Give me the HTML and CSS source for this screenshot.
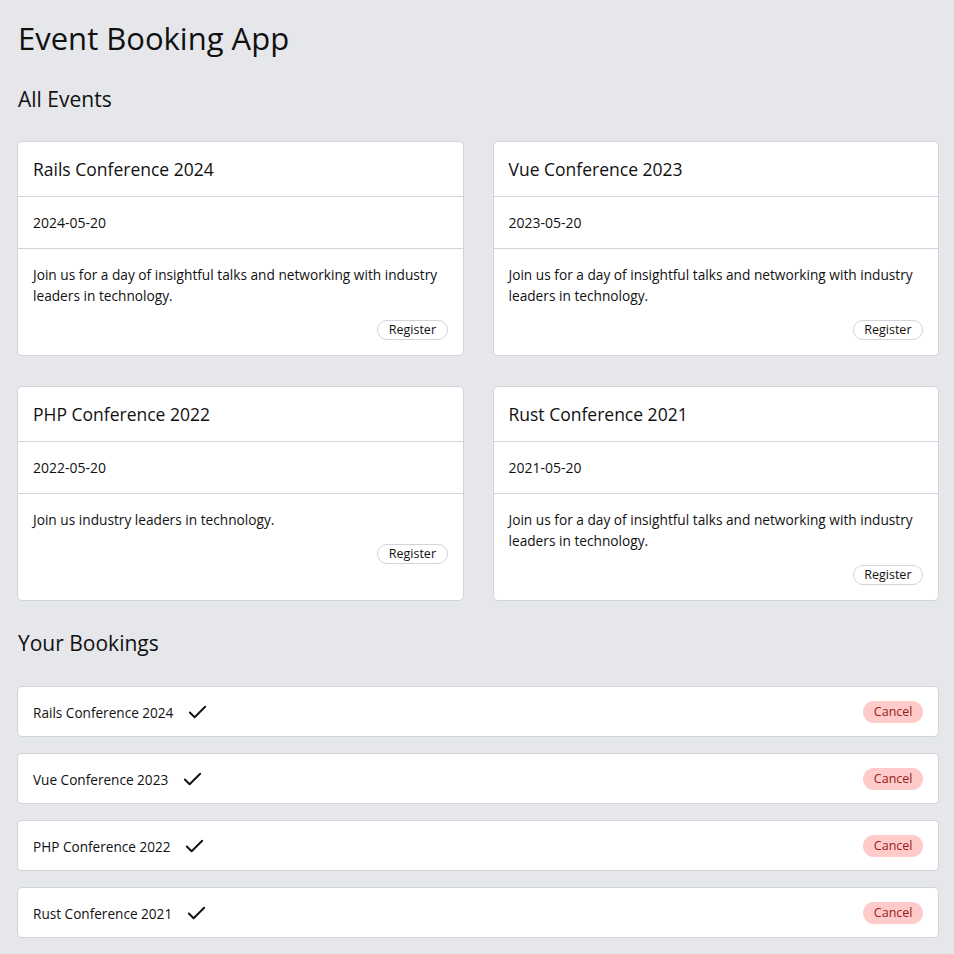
FILE: index.html
```html
<!DOCTYPE html>
<html lang="en">
<head>
<meta charset="utf-8">
<title>Event Booking App</title>
<link rel="stylesheet" href="styles.css">
</head>
<body>
<main class="app">
  <h1 class="app-title">Event Booking App</h1>

  <section class="section">
    <h2 class="section-title">All Events</h2>
    <div class="event-grid">
      <article class="event-card">
        <header class="event-head">Rails Conference 2024</header>
        <div class="event-date">2024-05-20</div>
        <div class="event-body">
          <p class="event-desc">Join us for a day of insightful talks and networking with industry leaders in technology.</p>
          <div class="event-actions"><button class="btn-register">Register</button></div>
        </div>
      </article>
      <article class="event-card">
        <header class="event-head">Vue Conference 2023</header>
        <div class="event-date">2023-05-20</div>
        <div class="event-body">
          <p class="event-desc">Join us for a day of insightful talks and networking with industry leaders in technology.</p>
          <div class="event-actions"><button class="btn-register">Register</button></div>
        </div>
      </article>
      <article class="event-card">
        <header class="event-head">PHP Conference 2022</header>
        <div class="event-date">2022-05-20</div>
        <div class="event-body">
          <p class="event-desc">Join us industry leaders in technology.</p>
          <div class="event-actions"><button class="btn-register">Register</button></div>
        </div>
      </article>
      <article class="event-card">
        <header class="event-head">Rust Conference 2021</header>
        <div class="event-date">2021-05-20</div>
        <div class="event-body">
          <p class="event-desc">Join us for a day of insightful talks and networking with industry leaders in technology.</p>
          <div class="event-actions"><button class="btn-register">Register</button></div>
        </div>
      </article>
    </div>
  </section>

  <section class="section">
    <h2 class="section-title section-title--bookings">Your Bookings</h2>
    <ul class="booking-list">
      <li class="booking">
        <span class="booking-name">Rails Conference 2024
          <svg class="check" viewBox="0 0 24 24" fill="none" stroke="currentColor" stroke-width="2" stroke-linecap="round" stroke-linejoin="round"><polyline points="20 6 9 17 4 12"/></svg>
        </span>
        <button class="btn-cancel">Cancel</button>
      </li>
      <li class="booking">
        <span class="booking-name">Vue Conference 2023
          <svg class="check" viewBox="0 0 24 24" fill="none" stroke="currentColor" stroke-width="2" stroke-linecap="round" stroke-linejoin="round"><polyline points="20 6 9 17 4 12"/></svg>
        </span>
        <button class="btn-cancel">Cancel</button>
      </li>
      <li class="booking">
        <span class="booking-name">PHP Conference 2022
          <svg class="check" viewBox="0 0 24 24" fill="none" stroke="currentColor" stroke-width="2" stroke-linecap="round" stroke-linejoin="round"><polyline points="20 6 9 17 4 12"/></svg>
        </span>
        <button class="btn-cancel">Cancel</button>
      </li>
      <li class="booking">
        <span class="booking-name">Rust Conference 2021
          <svg class="check" viewBox="0 0 24 24" fill="none" stroke="currentColor" stroke-width="2" stroke-linecap="round" stroke-linejoin="round"><polyline points="20 6 9 17 4 12"/></svg>
        </span>
        <button class="btn-cancel">Cancel</button>
      </li>
    </ul>
  </section>
</main>
</body>
</html>
```

FILE: styles.css
```css
* { box-sizing: border-box; }

html, body {
  margin: 0;
  padding: 0;
  background: #e5e7eb;
}

body {
  font-family: "Open Sans", "Noto Sans", sans-serif;
  color: #111111;
}

.app {
  padding: 18px 15px 16px 17px;
}

.app-title {
  margin: 0 0 27px 1px;
  font-size: 31px;
  line-height: 40px;
  font-weight: 400;
}

.section {
  margin-bottom: 28px;
}

.section-title {
  margin: 0 0 28px 1px;
  font-size: 21px;
  line-height: 28px;
  font-weight: 400;
}

.section-title--bookings {
  margin-bottom: 29px;
}

.event-grid {
  display: grid;
  grid-template-columns: 1fr 1fr;
  column-gap: 29px;
  row-gap: 30px;
}

.event-card {
  background: #ffffff;
  border: 1px solid #d1d5db;
  border-radius: 5px;
  display: flex;
  flex-direction: column;
}

.event-head {
  padding: 15px;
  font-size: 17.5px;
  line-height: 24px;
  border-bottom: 1px solid #d1d5db;
}

.event-date {
  padding: 15px;
  font-size: 14px;
  line-height: 21px;
  border-bottom: 1px solid #d1d5db;
}

.event-body {
  padding: 15px;
  flex: 1;
}

.event-desc {
  margin: 0 0 14px;
  font-size: 13.7px;
  line-height: 21px;
}

.event-actions {
  display: flex;
  justify-content: flex-end;
}

.btn-register {
  font-family: inherit;
  font-size: 12.5px;
  line-height: 18px;
  padding: 0 10.5px;
  background: #ffffff;
  color: #111111;
  border: 1px solid #d1d5db;
  border-radius: 999px;
}

.booking-list {
  list-style: none;
  margin: 0;
  padding: 0;
  display: flex;
  flex-direction: column;
  gap: 16px;
}

.booking {
  background: #ffffff;
  border: 1px solid #d1d5db;
  border-radius: 5px;
  padding: 14px 15px 13px;
  display: flex;
  align-items: center;
  justify-content: space-between;
}

.booking-name {
  display: flex;
  align-items: center;
  gap: 13px;
  font-size: 13.6px;
  line-height: 21px;
}

.check {
  width: 23px;
  height: 23px;
  margin: -1px 0;
  color: #111111;
}

.btn-cancel {
  font-family: inherit;
  font-size: 12.5px;
  line-height: 18px;
  padding: 2px 10.5px;
  background: #fecaca;
  color: #991b1b;
  border: none;
  border-radius: 999px;
}
```
